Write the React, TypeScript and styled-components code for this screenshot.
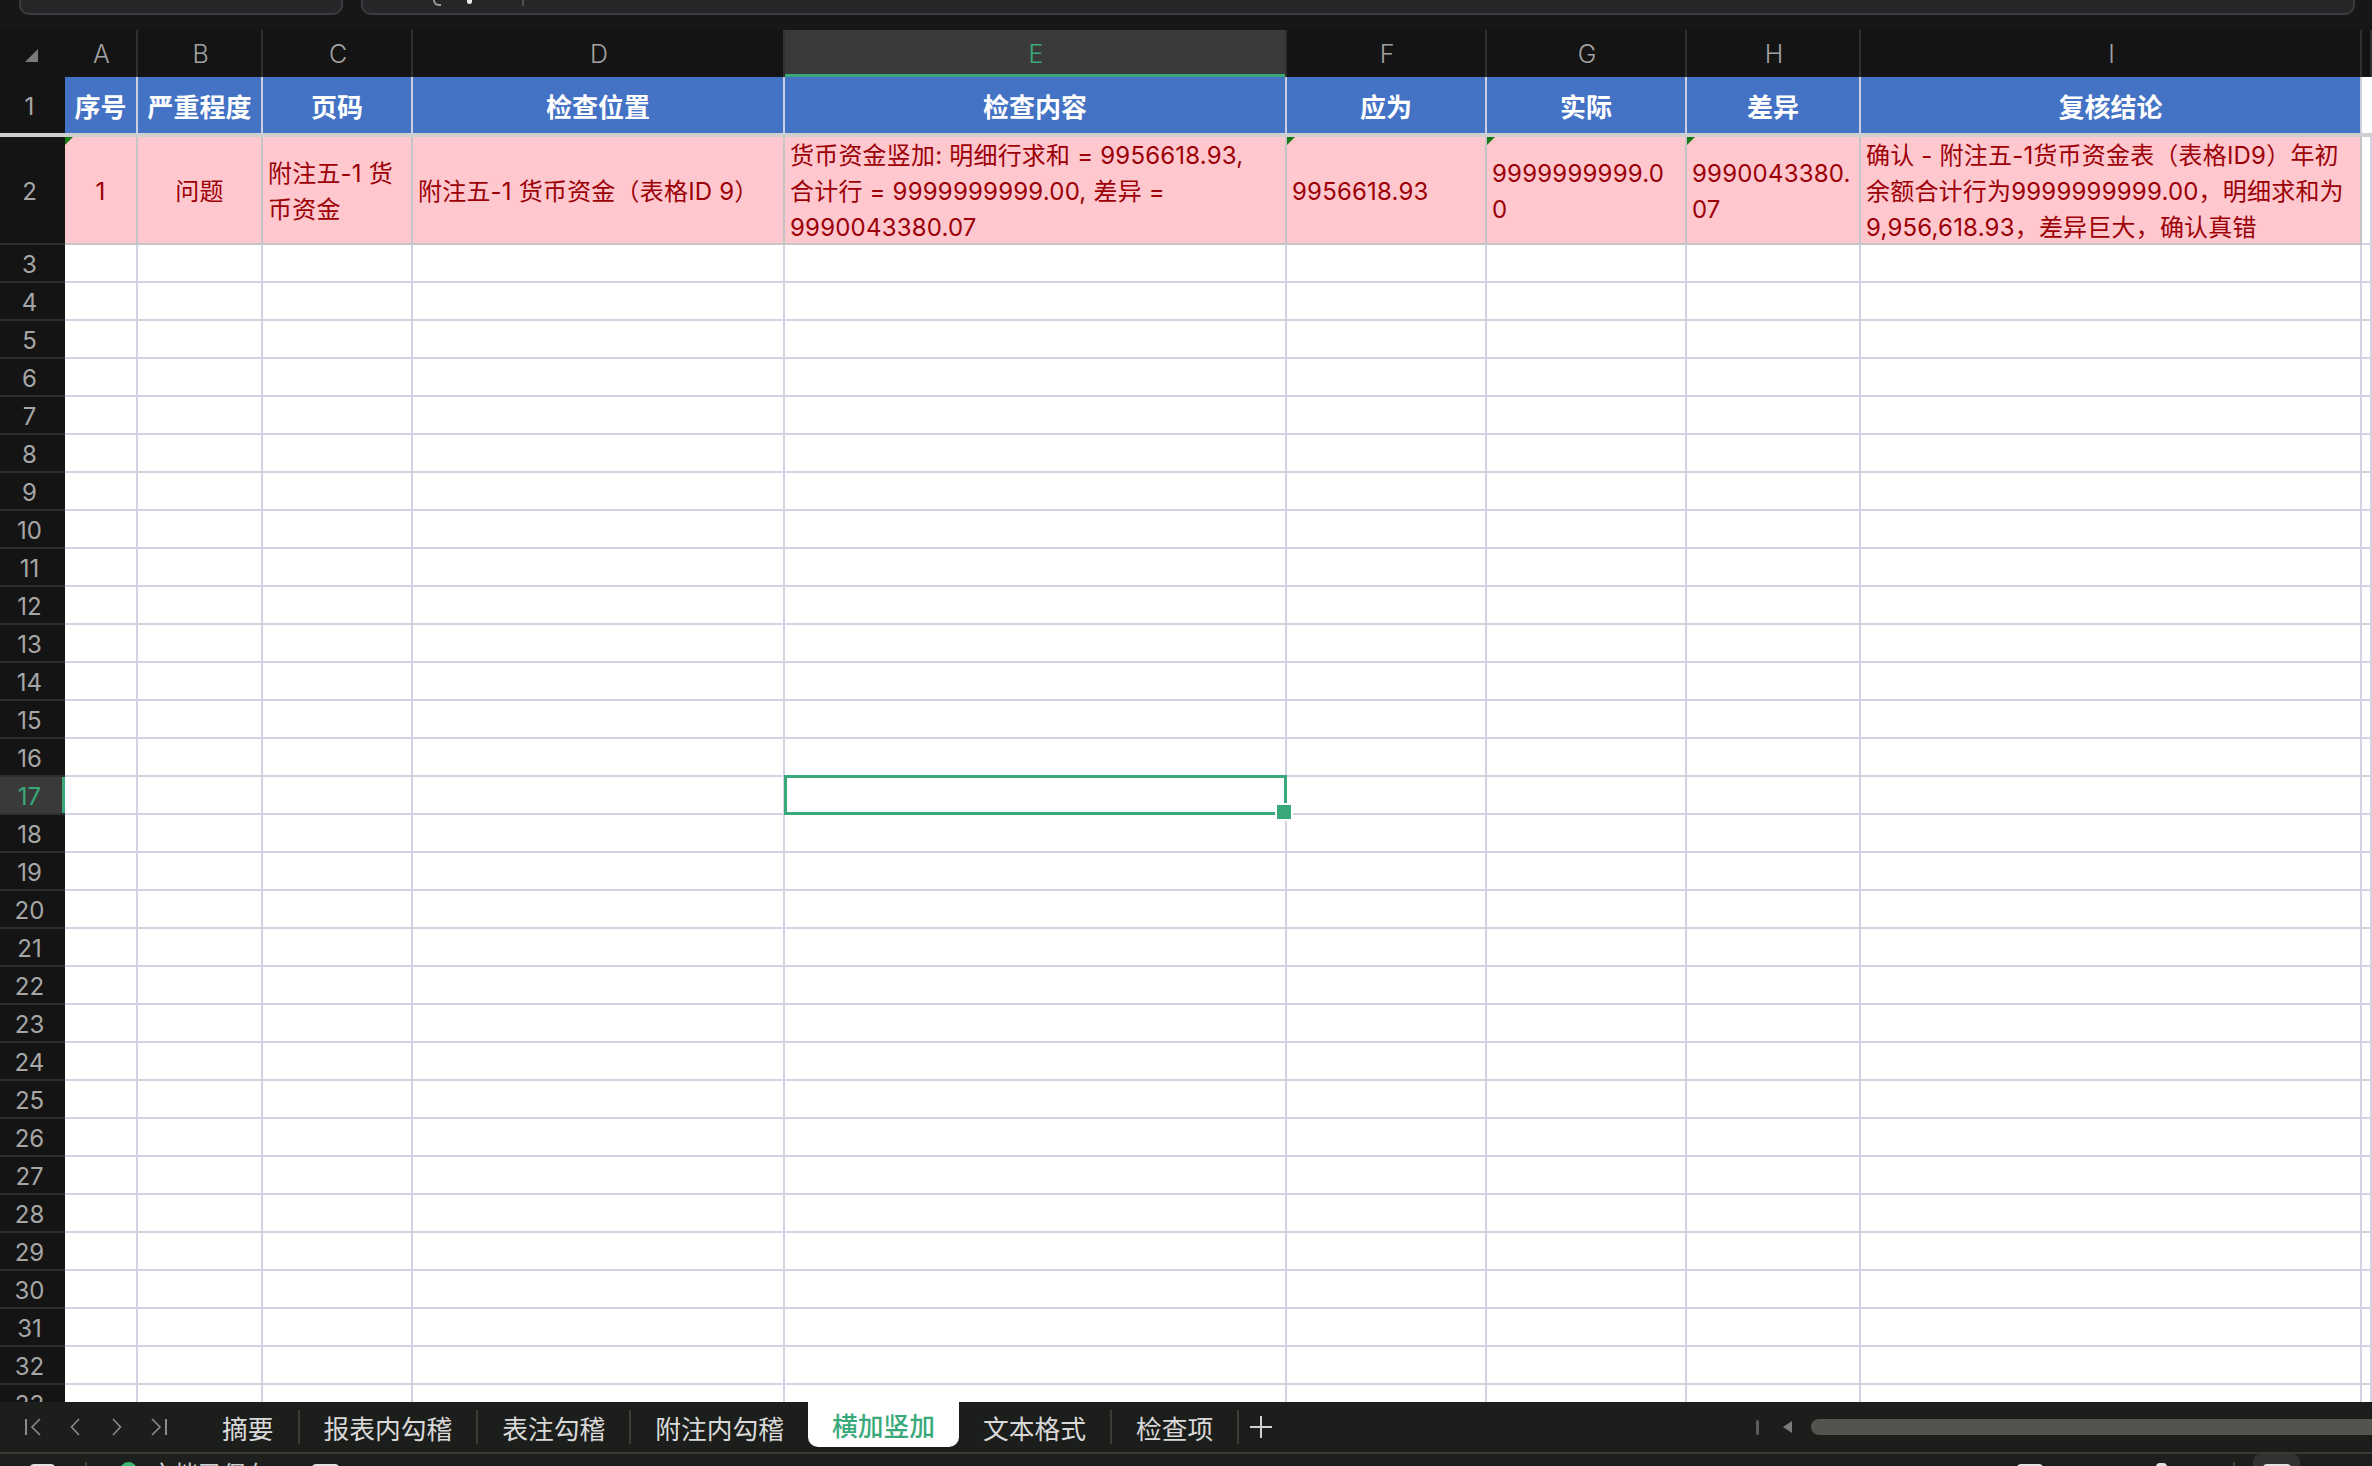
import React from "react";
import styled, { createGlobalStyle, css } from "styled-components";

const GREEN = "#3aa97a";
const GRID = "#d2d4e4";
const FONT = `"Inter", "Noto Sans CJK SC", sans-serif`;

const columns = [
  { id: "A", width: 73, title: "序号" },
  { id: "B", width: 125, title: "严重程度" },
  { id: "C", width: 150, title: "页码" },
  { id: "D", width: 372, title: "检查位置" },
  { id: "E", width: 502, title: "检查内容" },
  { id: "F", width: 200, title: "应为" },
  { id: "G", width: 200, title: "实际" },
  { id: "H", width: 174, title: "差异" },
  { id: "I", width: 501, title: "复核结论" },
];

const TEMPLATE = `65px ${columns.map((c) => `${c.width}px`).join(" ")} 1fr`;

type Entry = { text: string; center?: boolean; flag?: boolean };

const issueRow: Entry[] = [
  { text: "1", center: true, flag: true },
  { text: "问题", center: true },
  { text: "附注五-1 货\n币资金" },
  { text: "附注五-1 货币资金（表格ID 9）" },
  { text: "货币资金竖加: 明细行求和 = 9956618.93,\n合计行 = 9999999999.00, 差异 =\n9990043380.07" },
  { text: "9956618.93", flag: true },
  { text: "9999999999.0\n0", flag: true },
  { text: "9990043380.\n07", flag: true },
  {
    text: "确认 - 附注五-1货币资金表（表格ID9）年初\n余额合计行为9999999999.00，明细求和为\n9,956,618.93，差异巨大，确认真错",
  },
];

const tabs = ["摘要", "报表内勾稽", "表注勾稽", "附注内勾稽", "横加竖加", "文本格式", "检查项"];
const ACTIVE_TAB = 4;
const ACTIVE_COL = "E";
const ACTIVE_ROW = 17;

const GlobalStyle = createGlobalStyle`
  html, body, #root { height: 100%; }
  body {
    margin: 0;
    background: #161616;
    font-family: ${FONT};
    overflow: hidden;
  }
  * { box-sizing: border-box; }
`;

const Window = styled.div`
  height: 100vh;
  display: flex;
  flex-direction: column;
  background: #161616;
`;

/* ---------- top toolbar stub ---------- */

const TopBar = styled.div`
  height: 30px;
  flex: none;
  display: flex;
  align-items: flex-start;
  gap: 18px;
  padding: 0 17px 0 19px;
  background: #171717;
`;

const Field = styled.div<{ $w?: number }>`
  height: 15px;
  ${(p) => (p.$w ? `width: ${p.$w}px; flex: none;` : "flex: 1;")}
  display: flex;
  align-items: flex-start;
  background: #252628;
  border: 2px solid #3b3c3f;
  border-top: none;
  border-radius: 0 0 10px 10px;
`;

const FieldArc = styled.div`
  margin-left: 70px;
  width: 8px;
  height: 6px;
  border: 2px solid #9a9a9a;
  border-top: none;
  border-right: none;
  border-radius: 0 0 0 6px;
`;

const FieldDot = styled.div`
  margin-left: 26px;
  width: 5px;
  height: 4px;
  border-radius: 0 0 3px 3px;
  background: #e8e8e8;
`;

const FieldSep = styled.div`
  margin-left: 50px;
  width: 2px;
  height: 6px;
  background: #505050;
`;

/* ---------- sheet ---------- */

const Sheet = styled.div`
  flex: 1;
  min-height: 0;
  overflow: hidden;
  background: #ffffff;
`;

const Row = styled.div<{ $h: number }>`
  display: grid;
  grid-template-columns: ${TEMPLATE};
  height: ${(p) => p.$h}px;
`;

const Corner = styled.div`
  background: #141414;
  display: flex;
  align-items: flex-start;
  padding: 19px 0 0 25px;
`;

const ColHead = styled.div<{ $active?: boolean }>`
  display: flex;
  align-items: center;
  justify-content: center;
  padding-left: 2px;
  background: #141414;
  color: #a2a2a2;
  font-size: 25px;
  font-weight: 300;
  border-right: 2px solid #303030;
  ${(p) =>
    p.$active &&
    css`
      background: #3a3a3a;
      color: ${GREEN};
      box-shadow: inset 0 -3px 0 ${GREEN};
    `}
`;

const RowHead = styled.div<{ $active?: boolean; $freeze?: boolean }>`
  display: flex;
  align-items: center;
  justify-content: center;
  padding: 2px 6px 0 0;
  background: #141414;
  color: #a6a6a6;
  font-size: 24px;
  border-bottom: 2px solid #2e2e2e;
  ${(p) => p.$freeze && `border-bottom: 4px solid #cfcfcf;`}
  ${(p) =>
    p.$active &&
    css`
      background: #3a3a3a;
      color: ${GREEN};
      box-shadow: inset -3px 0 0 ${GREEN};
    `}
`;

const TitleCell = styled.div`
  display: flex;
  align-items: center;
  justify-content: center;
  background: #4472c4;
  color: #ffffff;
  font-size: 26px;
  font-weight: 700;
  border-right: 2px solid #c9cfdc;
  border-bottom: 4px solid #cfcfcf;
  white-space: nowrap;
`;

const IssueCell = styled.div<{ $center?: boolean; $flag?: boolean }>`
  position: relative;
  display: flex;
  align-items: center;
  justify-content: ${(p) => (p.$center ? "center" : "flex-start")};
  text-align: ${(p) => (p.$center ? "center" : "left")};
  padding: 3px 5px 0;
  background: #ffc7ce;
  color: #9c0006;
  font-size: 24px;
  letter-spacing: 0.2px;
  line-height: 36px;
  white-space: pre;
  overflow: hidden;
  border-right: 2px solid #c4c4c4;
  border-bottom: 2px solid #c6c6c6;
  ${(p) =>
    p.$flag &&
    css`
      &::before {
        content: "";
        position: absolute;
        top: 0;
        left: 0;
        border-top: 8px solid #137a13;
        border-right: 8px solid transparent;
      }
    `}
`;

const Blank = styled.div<{ $freeze?: boolean; $selected?: boolean }>`
  background: #ffffff;
  border-right: 2px solid ${GRID};
  border-bottom: 2px solid ${GRID};
  ${(p) => p.$freeze && `border-bottom: 4px solid #cfcfcf; border-right: none;`}
  ${(p) =>
    p.$selected &&
    css`
      position: relative;
      &::after {
        content: "";
        position: absolute;
        top: -2px;
        left: -1px;
        right: -2px;
        bottom: -2px;
        border: 3px solid ${GREEN};
        z-index: 2;
      }
      &::before {
        content: "";
        position: absolute;
        right: -8px;
        bottom: -8px;
        width: 14px;
        height: 14px;
        background: ${GREEN};
        border: 2px solid #ffffff;
        z-index: 3;
      }
    `}
`;

/* ---------- sheet tabs ---------- */

const TabBar = styled.div`
  height: 50px;
  flex: none;
  display: flex;
  align-items: stretch;
  background: #1c1e1b;
`;

const NavGroup = styled.div`
  display: flex;
  align-items: center;
  padding-left: 12px;
  margin-right: 18px;
`;

const NavButton = styled.div`
  width: 42px;
  display: flex;
  align-items: center;
  justify-content: center;
  color: #8b8b8b;
`;

const Tab = styled.div<{ $active?: boolean }>`
  display: flex;
  align-items: center;
  padding: 0 24px;
  font-size: 25.75px;
  color: #d9d9d9;
  white-space: nowrap;
  ${(p) =>
    p.$active &&
    css`
      height: 45px;
      background: #ffffff;
      color: ${GREEN};
      font-weight: 500;
      border-radius: 0 0 10px 10px;
    `}
`;

const TabSep = styled.div`
  width: 2px;
  height: 34px;
  align-self: center;
  background: #3c3e3a;
`;

const AddButton = styled.div`
  display: flex;
  align-items: center;
  padding: 0 10px;
  color: #d2d2d2;
`;

const ScrollArea = styled.div`
  margin-left: auto;
  display: flex;
  align-items: center;
`;

const ScrollTick = styled.div`
  width: 3px;
  height: 15px;
  border-radius: 2px;
  background: #5c5d5b;
  margin-right: 24px;
`;

const ScrollArrow = styled.div`
  width: 0;
  height: 0;
  border-top: 6px solid transparent;
  border-bottom: 6px solid transparent;
  border-right: 9px solid #7b7c79;
  margin-right: 19px;
`;

const ScrollThumb = styled.div`
  width: 561px;
  height: 16px;
  border-radius: 8px 0 0 8px;
  background: #52554f;
`;

/* ---------- status bar (cut off) ---------- */

const StatusBar = styled.div`
  height: 14px;
  flex: none;
  display: flex;
  align-items: flex-start;
  overflow: hidden;
  background: #1d1f1c;
  border-top: 2px solid #383a36;
`;

const Chip = styled.div<{ $ml: number; $w: number; $top?: number }>`
  flex: none;
  margin-left: ${(p) => p.$ml}px;
  margin-top: ${(p) => p.$top ?? 10}px;
  width: ${(p) => p.$w}px;
  height: 16px;
  border-radius: 4px;
  background: #e4e4e4;
`;

const StatusSep = styled.div<{ $ml: number }>`
  flex: none;
  margin-left: ${(p) => p.$ml}px;
  margin-top: 8px;
  width: 2px;
  height: 12px;
  background: #454743;
`;

const StatusDot = styled.div`
  flex: none;
  margin-left: 33px;
  margin-top: 8px;
  width: 17px;
  height: 17px;
  border-radius: 50%;
  background: #3dba72;
`;

const StatusText = styled.div`
  flex: none;
  margin-left: 13px;
  margin-top: 9px;
  font-size: 24px;
  line-height: 24px;
  color: #cfcfcf;
  white-space: nowrap;
`;

const StatusRight = styled.div`
  margin-left: auto;
  display: flex;
  align-items: flex-start;
  padding-right: 72px;
`;

const GrayBox = styled.div`
  flex: none;
  margin-left: 18px;
  width: 47px;
  height: 20px;
  border-radius: 8px 8px 0 0;
  background: #333431;
  display: flex;
  justify-content: center;
  padding-top: 10px;
`;

const GrayBoxInner = styled.div`
  width: 28px;
  height: 12px;
  border-radius: 4px;
  background: #e4e4e4;
`;

/* ---------- icons ---------- */

const Chevron = ({ dir, bar }: { dir: "left" | "right"; bar?: boolean }) => {
  const left = dir === "left";
  return (
    <svg width={bar ? 18 : 10} height="18" viewBox={bar ? "0 0 18 18" : "0 0 10 18"} fill="none">
      {bar ? (
        left ? (
          <>
            <line x1="2" y1="1" x2="2" y2="17" stroke="currentColor" strokeWidth="2" />
            <polyline points="16,1 8,9 16,17" stroke="currentColor" strokeWidth="1.6" />
          </>
        ) : (
          <>
            <polyline points="2,1 10,9 2,17" stroke="currentColor" strokeWidth="1.6" />
            <line x1="16" y1="1" x2="16" y2="17" stroke="currentColor" strokeWidth="2" />
          </>
        )
      ) : left ? (
        <polyline points="9,1 1.5,9 9,17" stroke="currentColor" strokeWidth="1.6" />
      ) : (
        <polyline points="1,1 8.5,9 1,17" stroke="currentColor" strokeWidth="1.6" />
      )}
    </svg>
  );
};

const PlusIcon = () => (
  <svg width="24" height="24" viewBox="0 0 24 24" fill="none">
    <line x1="12" y1="1" x2="12" y2="23" stroke="currentColor" strokeWidth="2" />
    <line x1="1" y1="12" x2="23" y2="12" stroke="currentColor" strokeWidth="2" />
  </svg>
);

const CornerMark = () => (
  <svg width="13" height="13" viewBox="0 0 13 13">
    <polygon points="13,0 13,13 0,13" fill="#7a7a7a" />
  </svg>
);

/* ---------- app ---------- */

const blankRows = Array.from({ length: 31 }, (_, i) => i + 3);

export default function App() {
  return (
    <Window>
      <GlobalStyle />
      <TopBar>
        <Field $w={324} />
        <Field>
          <FieldArc />
          <FieldDot />
          <FieldSep />
        </Field>
      </TopBar>

      <Sheet>
        <Row $h={47}>
          <Corner>
            <CornerMark />
          </Corner>
          {columns.map((c) => (
            <ColHead key={c.id} $active={c.id === ACTIVE_COL}>
              {c.id}
            </ColHead>
          ))}
          <ColHead />
        </Row>

        <Row $h={60}>
          <RowHead $freeze>1</RowHead>
          {columns.map((c) => (
            <TitleCell key={c.id}>{c.title}</TitleCell>
          ))}
          <Blank $freeze />
        </Row>

        <Row $h={108}>
          <RowHead>2</RowHead>
          {issueRow.map((cell, i) => (
            <IssueCell key={i} $center={cell.center} $flag={cell.flag}>
              {cell.text}
            </IssueCell>
          ))}
          <Blank />
        </Row>

        {blankRows.map((n) => (
          <Row key={n} $h={38}>
            <RowHead $active={n === ACTIVE_ROW}>{n}</RowHead>
            {columns.map((c) => (
              <Blank key={c.id} $selected={n === ACTIVE_ROW && c.id === ACTIVE_COL} />
            ))}
            <Blank />
          </Row>
        ))}
      </Sheet>

      <TabBar>
        <NavGroup>
          <NavButton>
            <Chevron dir="left" bar />
          </NavButton>
          <NavButton>
            <Chevron dir="left" />
          </NavButton>
          <NavButton>
            <Chevron dir="right" />
          </NavButton>
          <NavButton>
            <Chevron dir="right" bar />
          </NavButton>
        </NavGroup>
        {tabs.map((name, i) => (
          <React.Fragment key={name}>
            <Tab $active={i === ACTIVE_TAB}>{name}</Tab>
            {i !== ACTIVE_TAB && i + 1 !== ACTIVE_TAB && <TabSep />}
          </React.Fragment>
        ))}
        <AddButton>
          <PlusIcon />
        </AddButton>
        <ScrollArea>
          <ScrollTick />
          <ScrollArrow />
          <ScrollThumb />
        </ScrollArea>
      </TabBar>

      <StatusBar>
        <Chip $ml={30} $w={25} />
        <StatusSep $ml={30} />
        <StatusDot />
        <StatusText>文档已保存</StatusText>
        <Chip $ml={42} $w={27} />
        <StatusRight>
          <Chip $ml={0} $w={26} />
          <Chip $ml={113} $w={11} $top={9} />
          <StatusSep $ml={66} />
          <GrayBox>
            <GrayBoxInner />
          </GrayBox>
        </StatusRight>
      </StatusBar>
    </Window>
  );
}
